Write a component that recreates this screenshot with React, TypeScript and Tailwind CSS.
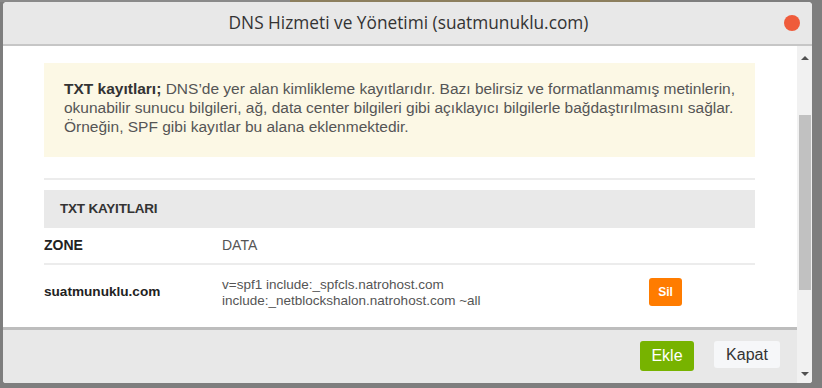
import { X } from 'lucide-react';

export default function App() {
  return (
    <div className="w-[822px] h-[388px] bg-[#7e7e7e] overflow-hidden flex flex-col" style={{ fontFamily: '"Liberation Sans", Arial, sans-serif' }}>
      <div className="h-[2px] flex shrink-0">
        <div className="w-[290px] bg-[#8a8a8a]" />
        <div className="w-[360px] bg-[#8c7f5e]" />
      </div>
      <div className="flex pl-[3px]">
        <div className="w-[809px] h-[381px] bg-white rounded-t-[4px] rounded-b-[3px] flex flex-col overflow-hidden">
          {/* header */}
          <div className="h-[44px] shrink-0 bg-[#e8e8e8] border-b-[2px] border-[#c6c6c6] flex items-center relative">
            <h1 className="w-full text-center text-[17.3px] text-[#333] pl-[2px]" style={{ fontFamily: '"Open Sans", sans-serif' }}>
              DNS Hizmeti ve Yönetimi (suatmunuklu.com)
            </h1>
            <button className="absolute right-[12px] top-[13px] w-[16px] h-[16px] rounded-full bg-[#ef5b3b]" aria-label="close">
              <X className="hidden" />
            </button>
          </div>

          <div className="flex flex-1 min-h-0">
            <div className="flex-1 flex flex-col min-w-0">
              <div className="h-[281px] shrink-0 overflow-hidden pl-[41px] pr-[42px] pt-[17px]">
                <div className="bg-[#fcf8e5] h-[94px] px-[20px] pt-[16px] text-[15.5px] leading-[19px] text-[#555] whitespace-nowrap">
                  <div><b className="text-[#333]">TXT kayıtları;</b> DNS’de yer alan kimlikleme kayıtlarıdır. Bazı belirsiz ve formatlanmamış metinlerin,</div>
                  <div>okunabilir sunucu bilgileri, ağ, data center bilgileri gibi açıklayıcı bilgilerle bağdaştırılmasını sağlar.</div>
                  <div>Örneğin, SPF gibi kayıtlar bu alana eklenmektedir.</div>
                </div>
                <div className="mt-[21px] border-t-[2px] border-[#ececec]" />
                <div className="mt-[10px] h-[38px] bg-[#e9e9e9] flex items-center pl-[16px] text-[13.5px] font-bold text-[#333] tracking-[-0.2px]">
                  TXT KAYITLARI
                </div>
                <div className="h-[37px] flex items-center border-b-[2px] border-[#ececec] text-[14px]">
                  <div className="w-[178px] font-bold text-[#222]">ZONE</div>
                  <div className="text-[#555]">DATA</div>
                </div>
                <div className="h-[54px] flex items-center text-[13.5px]">
                  <div className="w-[178px] font-bold text-[13.6px] text-[#222]">suatmunuklu.com</div>
                  <div className="w-[427px] text-[#555] leading-[16px] pt-[1px]">
                    <div>v=spf1 include:_spfcls.natrohost.com</div>
                    <div>include:_netblockshalon.natrohost.com ~all</div>
                  </div>
                  <button className="w-[33px] h-[28px] rounded-[3px] bg-[#ff7c00] text-white text-[12px] font-bold">Sil</button>
                </div>
              </div>
              <div className="flex-1 bg-[#e8e8e8] border-t-[3px] border-[#bdbdbd] flex items-start justify-end pt-[11px] pr-[17px] gap-[20px]">
                <button className="w-[54px] h-[30px] rounded-[3px] bg-[#77b300] text-white text-[16px]">Ekle</button>
                <button className="w-[66px] h-[27px] rounded-[3px] bg-[#f6f7f9] text-[#333] text-[16px]">Kapat</button>
              </div>
            </div>

            {/* scrollbar */}
            <div className="w-[15px] shrink-0 bg-[#f1f1f1] flex flex-col items-center relative">
              <div className="h-[15px] flex items-center justify-center mt-[4px]">
                <div className="w-0 h-0 border-l-[4px] border-r-[4px] border-b-[4px] border-l-transparent border-r-transparent border-b-[#505050]" />
              </div>
              <div className="mt-[50px] w-[12px] h-[175px] bg-[#c1c1c1]" />
              <div className="flex-1" />
              <div className="h-[15px] flex items-center justify-center mb-[2px]">
                <div className="w-0 h-0 border-l-[4px] border-r-[4px] border-t-[4px] border-l-transparent border-r-transparent border-t-[#505050]" />
              </div>
            </div>
          </div>
        </div>
      </div>
    </div>
  );
}
